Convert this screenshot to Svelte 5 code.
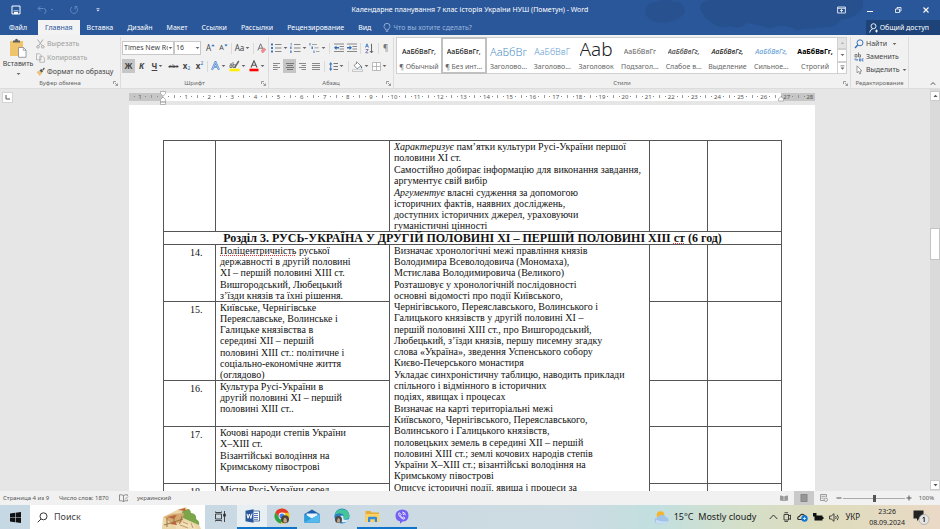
<script>
  const tabs = ['Файл', 'Главная', 'Вставка', 'Дизайн', 'Макет', 'Ссылки', 'Рассылки', 'Рецензирование', 'Вид'];
  const styles = [
    { name: '¶ Обычный', sample: 'АаБбВвГг,', kind: 'normal' },
    { name: '¶ Без инт...', sample: 'АаБбВвГг,', kind: 'normal', on: true },
    { name: 'Заголово...', sample: 'АаБбВг', kind: 'h1' },
    { name: 'Заголово...', sample: 'АаБбВвГ', kind: 'h2' },
    { name: 'Заголовок', sample: 'Ааb', kind: 'title' },
    { name: 'Подзагол...', sample: 'АаБбВвГг', kind: 'sub' },
    { name: 'Слабое в...', sample: 'АаБбВвГг,', kind: 'weak' },
    { name: 'Выделение', sample: 'АаБбВвГг,', kind: 'em' },
    { name: 'Сильное...', sample: 'АаБбВвГг,', kind: 'strongem' },
    { name: 'Строгий', sample: 'АаБбВвГг,', kind: 'strong' }
  ];
  const cm = 618 / 26.75;
  const origin = 34;
  const marks = [];
  for (let q = -5; q <= 115; q++) {
    if (q === 0) continue;
    const x = origin + (q * cm) / 4;
    if (x < 1 || x > 684) continue;
    marks.push({ x, whole: q % 4 === 0, half: Math.abs(q % 4) === 2, n: Math.abs(q / 4) });
  }
  const outcomes = [
    ['Визначає хронологічні межі правління князів', 'Володимира Всеволодовича (Мономаха),', 'Мстислава Володимировича (Великого)'],
    ['Розташовує у хронологічній послідовності', 'основні відомості про події Київського,', 'Чернігівського, Переяславського, Волинського і', 'Галицького князівств у другій половині XI –'],
    ['першій половині XIII ст., про Вишгородський,', 'Любецький, з’їзди князів, першу писемну згадку', 'слова «Україна», зведення Успенського собору', 'Києво-Печерського монастиря'],
    ['Укладає синхроністичну таблицю, наводить приклади', 'спільного і відмінного в історичних', 'подіях, явищах і процесах'],
    ['Визначає на карті територіальні межі', 'Київського, Чернігівського, Переяславського,', 'Волинського і Галицького князівств,'],
    ['половецьких земель в середині XII – першій', 'половині XIII ст.; землі кочових народів степів', 'України X–XIII ст.; візантійські володіння на', 'Кримському півострові'],
    ['Описує історичні події, явища і процеси за']
  ];
  const lessons = [
    { n: 15, h: 79, text: [['Київське, Чернігівське', 'Переяславське, Волинське і', 'Галицьке князівства в', 'середині XII – першій'], ['половині XIII ст.: політичне і', 'соціально-економічне життя', '(оглядово)']] },
    { n: 16, h: 46, text: [['Культура Русі-України в', 'другій половині XI – першій', 'половині XIII ст..']] },
    { n: 17, h: 57, text: [['Кочові народи степів України', 'X–XIII ст.'], ['Візантійські володіння на', 'Кримському півострові']] },
    { n: 18, h: 57, text: [['Місце Русі-України серед']] }
  ];
</script>

{#snippet chev()}
  <svg class="chev" width="5" height="4" viewBox="0 0 5 4"><path d="M.6 1h3.8L2.5 3z" fill="#666" /></svg>
{/snippet}

{#snippet paragraphs(list)}
  {#each list as lines}
    <p>{#each lines as line, i}{line}{#if i < lines.length - 1}<br />{/if}{/each}</p>
  {/each}
{/snippet}

{#snippet launcher()}
  <svg class="launcher" width="5" height="5" viewBox="0 0 5 5" fill="none" stroke="#777" stroke-width=".7"><path d="M.5 3V.5H3M2 2l2.3 2.3M4.5 2.5v2h-2" /></svg>
{/snippet}

<div class="app">
  <header>
    <svg class="clouds" viewBox="0 0 300 35" preserveAspectRatio="xMaxYMid slice" fill="#234b82">
      <path d="M6 8q2-7 12-6q8-5 15 0q6-2 9 3q7 8-3 13q-14 8-26 3q-10-4-7-13z" opacity=".45" />
      <path d="M60 8q0-8 12-8h150q4 8-5 14q-8 6-16 5q-4 9-15 8l-30 3q-8-5-18-4q-8 4-16 0l-15-3q-7 7-17 3q-10 4-18-3q-10-7-12-15z" opacity=".5" />
    </svg>
    <div class="titlebar">
      <div class="quick">
        <button aria-label="Сохранить"><svg width="10" height="10" viewBox="0 0 10 10"><path d="M1 1h8v8H1z" fill="none" stroke="#fff" /><path d="M2.500 5.400h5v.8h-5zM3 7h4v2H3z" fill="#fff" /></svg></button>
        <button aria-label="Отменить"><svg width="16" height="10" viewBox="0 0 16 10" fill="none" stroke="#5f86bf"><path d="M3.500 1 1 3.500 3.500 6M1 3.500h5.500q2.500 0 2.500 2.500t-2 2.500" /><path d="M14 4.500h2" /></svg></button>
        <button aria-label="Повторить"><svg width="10" height="10" viewBox="0 0 10 10" fill="none" stroke="#5f86bf"><path d="M3 2a3.500 3.500 0 1 0 4 0M8.500 1.500H6v3" /></svg></button>
        <button aria-label="Настройка панели"><svg width="6" height="6" viewBox="0 0 6 6" fill="#dbe5f3"><path d="M1.500 1h3v.8h-3zM1.300 2.700h3.400L3 4.600z" /></svg></button>
      </div>
      <h1>Календарне планування 7 клас історія України НУШ (Пометун) - Word</h1>
      <div class="wins">
        <button aria-label="Параметры ленты"><svg width="9" height="8" viewBox="0 0 9 8" fill="none" stroke="#fff" stroke-width=".8"><path d="M.6 1h7.800v6H.6zM.6 2.300h7.800M4.500 6.500V3.600M3 5l1.500-1.500L6 5" /></svg></button>
        <button aria-label="Свернуть"><svg width="8" height="8" viewBox="0 0 8 8"><path d="M1 5h6v1H1z" fill="#fff" /></svg></button>
        <button aria-label="Восстановить"><svg width="8" height="8" viewBox="0 0 8 8" fill="none" stroke="#fff" stroke-width=".8"><path d="M1.500 3h4v3.500h-4zM3 3V1.500h4V5H5.500" /></svg></button>
        <button aria-label="Закрыть"><svg width="8" height="8" viewBox="0 0 8 8" stroke="#fff" stroke-width="1.100"><path d="m1.500 1.500 5 5m0-5-5 5" /></svg></button>
      </div>
    </div>
    <nav class="tabs">
      {#each tabs as tab, i}
        <button class="t{i}" class:active={i === 1}>{tab}</button>
      {/each}
      <label class="tell">
        <svg width="8" height="10" viewBox="0 0 8 10" fill="none" stroke="#a9c0e0" stroke-width=".8"><path d="M2.800 7C2.800 5.500 1 5 1 3.300a3 3 0 0 1 6 0C7 5 5.200 5.500 5.200 7zM2.800 8.300h2.400" /></svg>
        <input type="text" placeholder="Что вы хотите сделать?" />
      </label>
      <button class="share"><svg width="9" height="10" viewBox="0 0 9 10" fill="none" stroke="#fff" stroke-width=".9"><circle cx="4.500" cy="3.200" r="2.500" /><path d="M.7 9.500q.3-3 3-3.600M6 8h3M7.500 6.500v3" /></svg>Общий доступ</button>
    </nav>
  </header>

  <section class="ribbon">
    <div class="group clip">
      <div class="body">
        <button class="paste">
          <svg width="18" height="20" viewBox="0 0 18 20"><path d="M1 3h13v15H1z" fill="#f0c36d" /><path d="M4 4.500V2.500h2q0-1.800 1.500-1.800T9 2.500h2v2z" fill="#5f5f5f" /><path d="M9.500 9.500h5l2.500 2.500v7.300H9.500z" fill="#fff" stroke="#888" stroke-width=".8" /><path d="M14.300 9.500v2.800H17" fill="none" stroke="#888" stroke-width=".7" /></svg>
          <span>Вставить</span>{@render chev()}
        </button>
        <div class="stack">
          <button class="off"><svg width="9" height="10" viewBox="0 0 9 10" fill="none" stroke="#aaa" stroke-width="1"><path d="M1.500.5 6 6.500M7 .5 2.800 6.500" /><circle cx="2" cy="7.800" r="1.300" /><circle cx="6.800" cy="7.800" r="1.300" /></svg>Вырезать</button>
          <button class="off"><svg width="9" height="10" viewBox="0 0 9 10" fill="#f4f4f4" stroke="#aaa" stroke-width=".8"><path d="M.5.8h3l1.500 1.500v4.500H.5zM3.800 3.300h3L8.400 5v4.300H3.800z" /></svg>Копировать</button>
          <button><svg width="9" height="10" viewBox="0 0 9 10"><path d="M.5 5 4 3.500l2 3L3.500 9z" fill="#eec27a" /><path d="m3.500 3.300 2-1.300 1.600 2.300L5.500 5.800zM6.300 2.300 8 .6l.8.8L7.300 3.500z" fill="#555" /></svg>Формат по образцу</button>
        </div>
      </div>
      <footer>Буфер обмена{@render launcher()}</footer>
    </div>

    <div class="group font">
      <div class="body rows">
        <div class="row">
          <span class="combo face"><select aria-label="Шрифт"><option>Times New Roman</option></select>{@render chev()}</span>
          <span class="combo size"><select aria-label="Размер"><option>16</option></select>{@render chev()}</span>
          <button class="b first" aria-label="Увеличить размер"><span>A</span><svg width="4" height="8" viewBox="0 0 4 8"><path d="m.3 2.300 1.700-2 1.700 2z" fill="#2b6cb8" /></svg></button>
          <button class="b" aria-label="Уменьшить размер"><span class="small">A</span><svg width="4" height="8" viewBox="0 0 4 8"><path d="m.3.500 1.700 2 1.700-2z" fill="#2b6cb8" /></svg></button>
          <i class="sep"></i>
          <button class="b wide">Aa{@render chev()}</button>
          <i class="sep"></i>
          <button class="b" aria-label="Очистить формат"><svg width="10" height="11" viewBox="0 0 10 11"><path d="M.8 7.500 3.600.8 6.300 7M1.900 5.200h3.200" fill="none" stroke="#666" stroke-width=".9" /><path d="m3.800 7.500 3-3 2.500 2-3 3.500H5z" fill="#ed8c94" /></svg></button>
        </div>
        <div class="row">
          <button class="b on"><b>Ж</b></button>
          <button class="b"><b><em>К</em></b></button>
          <button class="b wide"><b><u>Ч</u></b>{@render chev()}</button>
          <button class="b tiny"><s>abc</s></button>
          <button class="b"><b>x</b><sub>2</sub></button>
          <button class="b"><b>x</b><sup>2</sup></button>
          <i class="sep"></i>
          <button class="b wide" aria-label="Эффекты"><svg width="9" height="10" viewBox="0 0 9 10" fill="none"><path d="M1 8.800 4.500 1 8 8.800M2.300 6h4.400" stroke="#4a86cf" stroke-width="2" /><path d="M1 8.800 4.500 1 8 8.800M2.300 6h4.400" stroke="#e6f0fb" stroke-width=".6" /></svg>{@render chev()}</button>
          <button class="b wide" aria-label="Выделение цветом"><svg width="11" height="12" viewBox="0 0 11 12"><path d="M.5 8.700h10v2.600H.500z" fill="#ffee00" /><path d="M1 5h2v2.500H1zM1 4h2M4 2v5.500h2.500V4.800H4" fill="none" stroke="#555" stroke-width=".8" /><path d="M9.800 1 5.500 7.800" stroke="#666" stroke-width="1.500" /></svg>{@render chev()}</button>
          <button class="b wide" aria-label="Цвет текста"><svg width="10" height="12" viewBox="0 0 10 12"><path d="M.5 8.700h9v2.600h-9z" fill="#f00" /><path d="M2 7.500 5 .8l3 6.700M3 5.300h4" fill="none" stroke="#555" stroke-width="1.100" /></svg>{@render chev()}</button>
        </div>
      </div>
      <footer>Шрифт{@render launcher()}</footer>
    </div>

    <div class="group para">
      <div class="body rows">
        <div class="row">
          <button class="b wide" aria-label="Маркеры"><svg width="11" height="10" viewBox="0 0 11 10"><path d="M0 .500h2v2H0zM0 4h2v2H0zM0 7.500h2v2H0z" fill="#3e74b8" /><path d="M4 1h6.500v1H4zM4 4.500h6.500v1H4zM4 8h6.500v1H4z" fill="#888" /></svg>{@render chev()}</button>
          <button class="b wide" aria-label="Нумерация"><svg width="11" height="10" viewBox="0 0 11 10"><path d="M.7 0h1v2.500h-1zM0 3.500h1.700V6H0zM0 7.500h1.700V10H0z" fill="#6b94c8" /><path d="M4 1h6.500v1H4zM4 4.500h6.500v1H4zM4 8h6.500v1H4z" fill="#888" /></svg>{@render chev()}</button>
          <button class="b wide" aria-label="Многоуровневый список"><svg width="11" height="10" viewBox="0 0 11 10"><path d="M.5 0h1v2.500h-1zM2.500 3.500H4V6H2.500zM4.500 7.500h1V10h-1z" fill="#4d80c0" /><path d="M3 1h5v.8H3zM5.500 4.500h4v.8h-4zM7 8h3.500v.8H7z" fill="#888" /></svg>{@render chev()}</button>
          <i class="sep"></i>
          <button class="b" aria-label="Уменьшить отступ"><svg width="10" height="10" viewBox="0 0 10 10"><path d="M0 .500h10v1H0zM5.500 3H10v1H5.500zM5.500 5.500H10v1H5.500zM0 8h10v1H0z" fill="#888" /><path d="M0 4.800 2.500 2.500V4H5v1.500H2.500V7z" fill="#2f6cb5" /></svg></button>
          <button class="b" aria-label="Увеличить отступ"><svg width="10" height="10" viewBox="0 0 10 10"><path d="M0 .500h10v1H0zM5.500 3H10v1H5.500zM5.500 5.500H10v1H5.500zM0 8h10v1H0z" fill="#888" /><path d="M5 4.800 2.500 2.500V4H0v1.500h2.500V7z" fill="#2f6cb5" /></svg></button>
          <i class="sep"></i>
          <button class="b" aria-label="Сортировка"><svg width="9" height="11" viewBox="0 0 9 11" fill="none"><path d="M.5 4.500 2 .8l1.500 3.700M1 3.300h2" stroke="#3f7bc5" stroke-width=".9" /><path d="M.7 6.500h2.600L.7 9.800h2.600" stroke="#7a6fb0" stroke-width=".9" /><path d="M6.500.8v9M4.800 8l1.700 1.900L8.200 8" stroke="#666" /></svg></button>
          <i class="sep"></i>
          <button class="b pilcrow" aria-label="Знаки абзаца">¶</button>
        </div>
        <div class="row">
          <button class="b" aria-label="По левому краю"><svg width="7" height="7" viewBox="0 0 7 7"><path d="M0 0h7v1H0zM0 2h4.500v1H0zM0 4h7v1H0zM0 6h4.500v1H0z" fill="#888" /></svg></button>
          <button class="b on" aria-label="По центру"><svg width="8" height="7" viewBox="0 0 8 7"><path d="M0 0h8v1H0zM1 2h6v1H1zM0 4h8v1H0zM1 6h6v1H1z" fill="#777" /></svg></button>
          <button class="b" aria-label="По правому краю"><svg width="7" height="7" viewBox="0 0 7 7"><path d="M0 0h7v1H0zM2.500 2H7v1H2.500zM0 4h7v1H0zM2.500 6H7v1H2.500z" fill="#888" /></svg></button>
          <button class="b" aria-label="По ширине"><svg width="8" height="7" viewBox="0 0 8 7"><path d="M0 0h8v1H0zM0 2h8v1H0zM0 4h8v1H0zM0 6h8v1H0z" fill="#888" /></svg></button>
          <i class="sep"></i>
          <button class="b wide" aria-label="Интервал"><svg width="9" height="9" viewBox="0 0 9 9"><path d="M1.700 0 3.400 2.500H2.200v4h1.200L1.700 9 0 6.500h1.200v-4H0z" fill="#3a74ba" /><path d="M4.500 1H9v1H4.500zM4.500 4H9v1H4.500zM4.500 7H9v1H4.500z" fill="#777" /></svg>{@render chev()}</button>
          <i class="sep"></i>
          <button class="b wide" aria-label="Заливка"><svg width="11" height="11" viewBox="0 0 11 11"><path d="m2 4.500 3.500-3L9 5 5 7.800z" fill="#fff" stroke="#777" stroke-width=".8" /><path d="M4.500 3V.5" stroke="#777" stroke-width=".8" /><path d="M9 4.500q2 2 .8 3.200Q8.500 7 9 4.500z" fill="#3a74ba" /><path d="M.5 8.800h10v1.700H.500z" fill="#fff" stroke="#999" stroke-width=".5" /></svg>{@render chev()}</button>
          <button class="b wide" aria-label="Границы"><svg width="9" height="9" viewBox="0 0 9 9" fill="#fff" stroke="#aaa" stroke-width=".8"><path d="M.5.5h8v8h-8zM4.500.5v8M.5 4.500h8" /></svg>{@render chev()}</button>
        </div>
      </div>
      <footer>Абзац{@render launcher()}</footer>
    </div>

    <div class="group gal">
      <div class="body">
        <div class="gallery">
          {#each styles as s}
            <button class="style" class:sel={s.on}><span class="sample {s.kind}">{s.sample}</span><span class="name">{s.name}</span></button>
          {/each}
        </div>
        <div class="scroller">
          <button class="dis" aria-label="Вверх"><svg width="5" height="4" viewBox="0 0 5 4"><path d="M1 3h3L2.500 1z" fill="#aaa" /></svg></button>
          <button aria-label="Вниз">{@render chev()}</button>
          <button aria-label="Ещё"><svg width="5" height="6" viewBox="0 0 5 6"><path d="M.5.5h4v.8h-4zM.6 2.500h3.800L2.500 4.800z" fill="#666" /></svg></button>
        </div>
      </div>
      <footer>Стили{@render launcher()}</footer>
    </div>

    <div class="group edit">
      <div class="body stack">
        <button><svg width="10" height="10" viewBox="0 0 10 10" fill="none" stroke="#3a74ba"><circle cx="6" cy="3.800" r="3" /><path d="M3.700 6 1 9" stroke-width="1.500" /></svg>Найти<span class="gap">{@render chev()}</span></button>
        <button><svg width="10" height="10" viewBox="0 0 10 10" fill="none"><path d="M1 2.500h2V5H1zM4.500.5V5h2V2.800h-2" stroke="#666" stroke-width=".8" /><path d="M1 6.300v1.500h2.500M2.800 6.800l1 1-1 1M5.500 6.800h1.300V9H5.500zM9.500 6.800H8.300V9h1.200" stroke="#3a74ba" stroke-width=".8" /></svg>Заменить</button>
        <button><svg width="10" height="10" viewBox="0 0 10 10" fill="#fff" stroke="#888" stroke-width=".8"><path d="M3 .8v7l1.700-1.500 1 2.700 1.200-.5-1-2.500h2z" /></svg>Выделить{@render chev()}</button>
      </div>
      <footer>Редактирование</footer>
    </div>
    <button class="collapse" aria-label="Свернуть ленту"><svg width="6" height="5" viewBox="0 0 6 5" fill="none" stroke="#555"><path d="m.8 3.800 2.200-2.300 2.200 2.300" /></svg></button>
  </section>

  <div class="work">
    <div class="gutter"><button aria-label="Табуляция"><svg width="5" height="5" viewBox="0 0 5 5"><path d="M1 0v4h4" fill="none" stroke="#555" /></svg></button></div>
    <main>
      <svg class="ruler" width="686" height="16" viewBox="0 0 686 16">
        <path d="M0 4h686v8H0z" fill="#c6c6c6" />
        <path d="M34 4h618v8H34z" fill="#fff" />
        {#each marks as m}
          {#if m.whole}
            <text x={m.x} y="10" text-anchor="middle">{m.n}</text>
          {:else if m.half}
            <path d="M{Math.floor(m.x)} 6h1v3h-1z" fill="#999" />
          {:else}
            <path d="M{Math.floor(m.x)} 7h1v1h-1z" fill="#888" />
          {/if}
        {/each}
        <path d="M31.500 2.500h5v2L34 7.300l-2.500-2.800zM31.500 13V10.500L34 8l2.500 2.500V13zM31.500 13h5v2.500h-5zM649.500 12v-2l2.500-2.500 2.500 2.500v2z" fill="#fff" stroke="#999" stroke-width=".7" />
      </svg>
      <article>
        <table>
          <colgroup><col class="c1" /><col class="c2" /><col class="c3" /><col class="c4" /><col class="c5" /></colgroup>
          <tbody>
            <tr>
              <td></td><td></td>
              <td>
                <p><i>Характеризує</i> пам’ятки культури Русі-України першої<br />половини XI ст.</p>
                <p>Самостійно добирає інформацію для виконання завдання,<br />аргументує свій вибір</p>
                <p><i>Аргументує</i> власні судження за допомогою<br />історичних фактів, наявних досліджень,<br />доступних історичних джерел, ураховуючи<br />гуманістичні цінності</p>
              </td>
              <td></td><td></td>
            </tr>
            <tr><th colspan="5">Розділ 3. РУСЬ-УКРАЇНА У ДРУГІЙ ПОЛОВИНІ XI – ПЕРШІЙ ПОЛОВИНІ XIII <span class="typo">ст</span> (6 год)</th></tr>
            <tr style:height="57px">
              <td class="num">14.</td>
              <td>
                <p><span class="typo">Поліцентричність</span> руської<br />державності в другій половині<br />XI – першій половині XIII ст.</p>
                <p>Вишгородський, Любецький<br />з’їзди князів та їхні рішення.</p>
              </td>
              <td rowspan="5">{@render paragraphs(outcomes)}</td>
              <td></td><td></td>
            </tr>
            {#each lessons as l}
              <tr style:height="{l.h}px">
                <td class="num">{l.n}.</td>
                <td>{@render paragraphs(l.text)}</td>
                <td></td><td></td>
              </tr>
            {/each}
          </tbody>
        </table>
      </article>
    </main>
    <div class="vscroll">
      <button aria-label="Прокрутить вверх"><svg width="5" height="4" viewBox="0 0 5 4"><path d="M.5 3h4l-2-2.300z" fill="#555" /></svg></button>
      <div class="track"><div class="thumb"></div></div>
      <button aria-label="Прокрутить вниз"><svg width="5" height="4" viewBox="0 0 5 4"><path d="M.5 1h4l-2 2.300z" fill="#555" /></svg></button>
    </div>
  </div>

  <div class="status">
    <span class="pages">Страница 4 из 9</span>
    <span class="words">Число слов: 1870</span>
    <svg width="10" height="8" viewBox="0 0 10 8" fill="none" stroke="#777" stroke-width=".8"><path d="M4.500 1.500Q3 .5.500.8v6q2.500-.3 4 .7zM4.500 1.500Q6 .5 8.500.8v1M4.500 7.500q1.500-1 4-.7V5.500M6 5.500l3-3" /></svg>
    <span class="lang">украинский</span>
    <div class="views">
      <button aria-label="Режим чтения"><svg width="8" height="7" viewBox="0 0 8 7"><path d="M0 .5q2 0 3.700.7v5Q2 5.500 0 5.500zM8 .5q-2 0-3.700.7v5Q6 5.500 8 5.500z" fill="#999" /></svg></button>
      <button class="cur" aria-label="Разметка страницы"><svg width="8" height="8" viewBox="0 0 8 8"><path d="M.5 0h7v8h-7z" fill="#888" /><path d="M1.500 2h5M1.500 4h5M1.500 6h5" stroke="#bbb" stroke-width=".6" /></svg></button>
      <button aria-label="Веб-документ"><svg width="8" height="8" viewBox="0 0 8 8" fill="none" stroke="#888" stroke-width=".8"><path d="M4 6.500H.5v-6h6v2.500M1.500 2.300h4M1.500 4.200h2" /><circle cx="5.800" cy="5.700" r="1.700" /></svg></button>
    </div>
    <div class="zoom">
      <button aria-label="Уменьшить"><svg width="6" height="6" viewBox="0 0 6 6"><path d="M.5 2.500h5v1h-5z" fill="#555" /></svg></button>
      <input type="range" min="0" max="100" value="50" aria-label="Масштаб" />
      <button aria-label="Увеличить"><svg width="6" height="6" viewBox="0 0 6 6"><path d="M.5 2.500h5v1h-5zM2.500.500h1v5h-1z" fill="#555" /></svg></button>
      <span class="pct">100%</span>
    </div>
  </div>

  <div class="taskbar">
    <button class="start" aria-label="Пуск"><svg width="11" height="11" viewBox="0 0 11 11" fill="#111"><path d="M0 1.500 5 .8v4.400H0zM5.600.700 11 0v5.200H5.600zM0 5.800h5v4.400l-5-.7zM5.600 5.800H11V11l-5.400-.7z" /></svg></button>
    <label class="search">
      <svg width="11" height="11" viewBox="0 0 11 11" fill="none" stroke="#333"><circle cx="6.500" cy="4.300" r="3.500" /><path d="M4 7 .7 10.300" /></svg>
      <input type="text" placeholder="Поиск" />
      <svg class="art" width="39" height="23" viewBox="0 0 39 23">
        <path d="m1 11 8-4 8-4 7-2 2 3 9 10 4 9H0z" fill="#ead6a8" />
        <path d="M20 9q-1-5 4-5 4-3 5 3 6 1 5 6 4 2 3 6l-9-4-7-3z" fill="#7ba548" />
        <path d="m2 11 8-3 12-1-2 9-10 2z" fill="#d5a871" />
        <path d="m5 11 10-2-3 4zM16 4l7-2 1 3zM8 18l5-3 2 4z" fill="#c0603a" />
        <path d="M12 9v8M5 12v9M20 10l-3 10M2 19l10-3 9-3" stroke="#9a7643" fill="none" />
        <path d="m14 20 9-5 8 3 4 5H14z" fill="#f0dfb6" />
        <path d="m21 16 5 2M18 19l8 3M29 17l2 5" stroke="#c39a64" />
      </svg>
    </label>
    <button class="app-b" aria-label="Представление задач"><svg width="11" height="11" viewBox="0 0 11 11" fill="none" stroke="#333" stroke-width=".9"><path d="M.5 3h6v5h-6zM.5.500v1h6v-1M.500 10.500v-1h6v1M9.500 0v3M9.500 5.500V11" /><path d="M8.700 3h1.600v2.300H8.700z" fill="#333" /></svg></button>
    <button class="app-b open lit" aria-label="Word"><svg width="15" height="14" viewBox="0 0 15 14"><path d="M7 2h7.500v10H7z" fill="#fff" stroke="#2b579a" stroke-width=".8" /><path d="M9 4.500h4M9 6.500h4M9 8.500h4M9 10.300h4" stroke="#2b579a" stroke-width=".8" /><path d="M.5 1.700 8.500.3v13.400L.5 12.300z" fill="#2b579a" /><path d="m2 4.800 1 4.500 1.400-4.300L5.900 9.400 7 4.600" fill="none" stroke="#fff" /></svg></button>
    <button class="app-b open" aria-label="Chrome"><svg width="16" height="16" viewBox="0 0 16 16"><circle cx="8" cy="8" r="7.500" fill="#f4c20d" /><path d="M1.500 4.200a7.500 7.500 0 0 1 13.200.5H8L5 9.500z" fill="#e33b2e" /><path d="M1.500 4.200 5 9.700l3 2-1.200 3.700A7.500 7.500 0 0 1 1.500 4.200z" fill="#2ba24c" /><circle cx="8" cy="8" r="3.400" fill="#fff" /><circle cx="8" cy="8" r="2.600" fill="#4285f4" /><circle cx="11" cy="11.300" r="4" fill="#4c443b" /><path d="M9.500 14.500q-.5-4 1.500-5 2 1 2 5z" fill="#c9a684" /></svg></button>
    <button class="app-b" aria-label="Почта"><svg width="16" height="14" viewBox="0 0 16 14"><path d="M.5 5 8 .5 15.500 5v8.500H.5z" fill="#1c5fae" /><path d="M2.500 4.500h11V10h-11z" fill="#e9f5fc" /><path d="M.5 5 8 9.500 15.500 5v8.500H.5z" fill="#2a9fe0" /><path d="m.5 13.500 15-8.500v8.500z" fill="#55b9ee" /></svg></button>
    <button class="app-b" aria-label="Edge"><svg width="16" height="16" viewBox="0 0 16 16"><circle cx="8" cy="8" r="7.500" fill="#1e85c9" /><path d="M.8 7A7.500 7.500 0 0 1 15.500 7.500q0 4-4.500 3.800-2 0-1.500-1.500.8-3.800-3-4.300Q3 5.200.800 7z" fill="#43c49a" /><path d="M.8 7Q3 5 6 5.500q4 .5 3.500 4-3-2-4 1L2 12.500Q0 10 .800 7z" fill="#2c7fc0" /><path d="M6 9.500q0-2 2-2t1.500 2.300q-.5 2 1.500 2 3 .2 4-.8-2 4-6 3.500-3-1-3-5z" fill="#d7ecf6" /><circle cx="4.500" cy="11.500" r="3.500" fill="#4a4a4a" /><path d="M3 14.500q0-4 1.500-4.500 2 .5 1.500 4.500z" fill="#c3a287" /></svg></button>
    <button class="app-b open" aria-label="Проводник"><svg width="15" height="13" viewBox="0 0 15 13"><path d="M.5 1h5l1 1.500h7.500V12H.5z" fill="#e8ac33" /><path d="M.5 4h14v8H.5z" fill="#fbd364" /><path d="M3 12V8q0-1.200 1.200-1.200h6.600Q12 6.800 12 8v4h-2.200V9.300H5.200V12z" fill="#2e8be0" /></svg></button>
    <button class="app-b open" aria-label="Viber"><svg width="14" height="15" viewBox="0 0 14 15"><path d="M7 .5q6.500 0 6.500 6T7.500 12.500L5 14.800V12.300Q.5 11.500.5 6.500T7 .5z" fill="#7360f2" /><path d="M4.300 3.700q-1.300.8-.3 2.600Q5.500 9 8 10q1.300.5 2-.8L8.300 8l-.9.800Q6 8 5.300 6.400L6 5.500zM7.300 3q3 .3 3 3.200M7.500 4.700q1.300.1 1.300 1.400" fill="none" stroke="#fff" stroke-width=".9" /></svg></button>

    <div class="tray">
      <button class="weather"><svg width="16" height="14" viewBox="0 0 16 14"><circle cx="6.500" cy="5" r="3.800" fill="#f7b32b" /><path d="M3.500 13.500a3 3 0 0 1 .3-6 4.500 4.500 0 0 1 8.200-.3 3.200 3.200 0 0 1 0 6.300z" fill="#9fc3ea" /><path d="M3.500 13.500q-2.500-1-1.500-4 5 3 12 1.500-.3 2-2 2.500z" fill="#c9def5" /></svg>15°C&nbsp; Mostly cloudy</button>
      <svg width="9" height="6" viewBox="0 0 9 6" fill="none" stroke="#333"><path d="m.7 5 3.800-4 3.800 4" /></svg>
      <svg width="9" height="10" viewBox="0 0 9 10" fill="none" stroke="#333" stroke-width=".9"><path d="M1 2.500h4.500v5.500H1zM5.500 4l2-1v4.500l-2-1M1.500.7h3.500M1.500 9.600h3.500" /></svg>
      <svg width="11" height="10" viewBox="0 0 11 10"><path d="M1 7.500Q0 5 2.500 4.300 4.500 1 7.500 3.500L9 4.500" fill="none" stroke="#333" stroke-width="1.200" /><path d="M1 7.500h4" stroke="#333" /><circle cx="7.500" cy="6.500" r="3.200" fill="#1477d4" /><path d="M6 6.500h3M7.500 5v3" stroke="#fff" stroke-width=".7" /></svg>
      <svg width="11" height="8" viewBox="0 0 11 8" fill="#111"><path d="M1.500 2.500h8v5h-8zM9.500 4h1v2h-1zM0 0h3.500v3.500H0z" /></svg>
      <svg width="11" height="9" viewBox="0 0 11 9" fill="none" stroke="#333" stroke-width=".9"><path d="M.5 3v3h1.800L5 8.300V.7L2.300 3zM6.700 3q1 1.500 0 3M8.300 1.800q2 2.700 0 5.400" /></svg>
      <span class="kb">УКР</span>
      <time><span>23:26</span><span>08.09.2024</span></time>
      <button class="note" aria-label="Уведомления"><svg width="17" height="16" viewBox="0 0 17 16"><path d="M.5 1.500h10v8H6.500L4 12V9.500H.5z" fill="#222" /><circle cx="11" cy="10.500" r="5" fill="#e3e3e3" stroke="#999" stroke-width=".6" /><path d="m9.700 9.200 1.500-1v4.800" fill="none" stroke="#222" /></svg></button>
    </div>
  </div>
</div>

<style>
  :global(body) { margin: 0; }
  .app { height: 100vh; display: flex; flex-direction: column; overflow: hidden; font-family: "Noto Sans", "Open Sans", sans-serif; font-size: 7px; line-height: 10px; color: #444; background: #e6e6e6; }
  button, input, select { font: inherit; color: inherit; border: 0; padding: 0; margin: 0; background: none; border-radius: 0; }
  button { display: flex; align-items: center; justify-content: center; white-space: nowrap; cursor: pointer; }
  svg { flex: none; display: block; }
  p { margin: 0; }

  header { position: relative; flex: none; background: #2a579a; color: #fff; }
  .clouds { position: absolute; right: 0; top: 0; width: 300px; height: 35px; }
  .titlebar { position: relative; display: grid; grid-template-columns: 1fr auto 1fr; align-items: center; height: 20px; }
  .quick { display: flex; gap: 16px; padding-left: 11px; }
  h1 { margin: 0; font-size: 7px; font-weight: 400; }
  .wins { display: flex; justify-content: flex-end; gap: 20px; padding-right: 10px; }
  .tabs { position: relative; display: flex; height: 15px; }
  .tabs button { padding: 0 7px; }
  .tabs .t0 { padding: 0 11px 0 9px; }
  .tabs .active { background: #f3f3f3; color: #2a579a; }
  .tell { display: flex; align-items: center; gap: 2px; padding-left: 5px; flex: 1; }
  .tell input { width: 96px; outline: 0; }
  .tell input::placeholder { color: #9db7dc; opacity: 1; }
  .tabs .share { background: #1d4378; gap: 2px; padding: 0 11px 0 3px; }

  .ribbon { flex: none; display: flex; height: 54px; background: #f1f1f1; border-bottom: 1px solid #dcdcdc; box-sizing: border-box; }
  .group { display: flex; flex-direction: column; border-right: 1px solid #dcdcdc; margin: 2px 0 0; box-sizing: border-box; }
  .group .body { flex: 1; display: flex; min-height: 0; }
  .group footer { position: relative; height: 10px; text-align: center; color: #666; font-size: 6px; }
  .launcher { position: absolute; right: 2px; top: 3px; }
  .clip { width: 121px; }
  .font { width: 148px; }
  .para { width: 125px; }
  .gal { flex: 1; }
  .edit { width: 58px; }
  .paste { flex-direction: column; width: 36px; justify-content: flex-start; padding-top: 1px; }
  .paste span { margin-top: 1px; }
  .paste .chev { margin-top: 3px; }
  .clip .stack button { height: 14px; }
  .stack button { height: 13px; gap: 2px; justify-content: flex-start; }
  .off { color: #a0a0a0; }
  .group .body.stack { flex-direction: column; padding-left: 3px; }
  .gap { padding-left: 3px; }
  .body.rows { flex-direction: column; gap: 4px; padding: 4px 0 0 1px; }
  .row { display: flex; align-items: center; height: 14px; }
  .combo { position: relative; height: 14px; background: #fff; border: 1px solid #c8c8c8; box-sizing: border-box; }
  .combo select { appearance: none; width: 100%; height: 12px; padding: 0 5px 0 1px; font-size: 7px; line-height: 12px; display: block; outline: 0; }
  .combo .chev { position: absolute; right: 0; top: 4px; }
  .face { width: 52px; }
  .size { width: 27px; }
  .b { width: 13px; height: 14px; font-size: 8px; flex: none; }
  .b.first { margin-left: 3px; }
  .b.wide { width: 19px; gap: 1px; }
  .b.on { background: #c6c6c6; }
  .b .small { font-size: 7px; }
  .b.tiny { font-size: 6px; }
  .b sub, .b sup { font-size: 5px; line-height: 5px; color: #2b6cb8; }
  .b sub { align-self: flex-end; padding-bottom: 2px; }
  .b sup { align-self: flex-start; padding-top: 2px; }
  .b.pilcrow { width: 9px; color: #777; }
  .sep { width: 1px; height: 11px; background: #dadada; margin: 0 2px; flex: none; }
  .font .sep { margin: 0 1px; }

  .gallery { display: flex; flex: 1; background: #fff; border: 1px solid #d0d0d0; height: 37px; box-sizing: border-box; margin-left: 2px; }
  .style { flex: 1 1 0; width: 0; flex-direction: column; justify-content: flex-start; overflow: hidden; border: 1px solid transparent; gap: 1px; }
  .style.sel { border: 2px solid #c0c0c0; margin: -1px 0; }
  .sample { height: 22px; line-height: 26px; color: #222; font-size: 7px; font-weight: 500; overflow: hidden; max-width: 38px; }
  .name { color: #666; }
  .sample.h1 { font-size: 11px; color: #4f8fc9; font-weight: 300; max-width: 37px; }
  .sample.h2 { font-size: 9px; color: #5e9ad0; font-weight: 300; }
  .sample.title { font-size: 19px; line-height: 20px; font-weight: 300; }
  .sample.sub { color: #777; }
  .sample.weak { font-style: italic; color: #444; }
  .sample.em { font-style: italic; }
  .sample.strongem { font-style: italic; color: #6ea6d8; }
  .sample.strong { font-weight: 700; color: #000; }
  .scroller { display: flex; flex-direction: column; width: 9px; height: 37px; margin-right: 3px; }
  .scroller button { flex: 1; background: #fff; border: 1px solid #d0d0d0; border-left: 0; }
  .scroller .dis { background: #e4e4e4; }
  .collapse { align-self: flex-end; width: 31px; height: 10px; padding-left: 16px; }

  .work { flex: 1; min-height: 0; display: flex; }
  .gutter { width: 14px; padding: 3px 0 0 2px; box-sizing: border-box; }
  .gutter button { width: 11px; height: 11px; background: #fff; border: 1px solid #d2d2d2; }
  main { flex: 1; min-width: 0; display: flex; flex-direction: column; align-items: center; overflow: hidden; }
  .ruler { font-size: 6px; fill: #555; }
  article { flex: 1 0 auto; width: 686px; max-width: 100%; box-sizing: border-box; padding: 35px 34px 0; background: #fff; color: #111; font-family: "Liberation Serif", serif; font-size: 10px; line-height: 11px; }
  table { width: 100%; border-collapse: collapse; table-layout: fixed; }
  .c1 { width: 52px; } .c2 { width: 174px; } .c3 { width: 260px; } .c4 { width: 58px; } .c5 { width: 74px; }
  td, th { border: 1px solid #555; padding: 0 4px; vertical-align: top; white-space: nowrap; }
  th { font-size: 12px; line-height: 12px; text-align: center; }
  td.num { padding: 2px 0 0 26px; }
  p + p { margin-top: 1px; }
  .typo { text-decoration: underline dotted #e33 1px; text-underline-offset: 1px; text-decoration-skip-ink: none; }
  .vscroll { width: 10px; display: flex; flex-direction: column; background: #dadada; padding: 2px 0 1px; box-sizing: border-box; }
  .vscroll button { height: 10px; background: #fff; border: 1px solid #ccc; }
  .track { flex: 1; padding-top: 33%; display: flex; flex-direction: column; }
  .thumb { height: 32px; background: #fff; border: 1px solid #c4c4c4; box-sizing: border-box; margin-top: 124px; }

  .status { flex: none; display: flex; align-items: center; height: 14px; background: #f1f1f1; padding-left: 3px; color: #555; font-size: 6px; }
  .pages { width: 56px; } .words { width: 60px; } .lang { padding-left: 8px; }
  .views { display: flex; margin-left: auto; align-self: stretch; }
  .views button { width: 20px; }
  .views .cur { background: #cacaca; }
  .zoom { display: flex; align-items: center; padding-left: 2px; gap: 1px; }
  .zoom input { appearance: none; width: 62px; height: 10px; background: linear-gradient(#aaa, #aaa) center / 100% 1px no-repeat; }
  .zoom input::-webkit-slider-thumb { appearance: none; width: 3px; height: 7px; background: #555; }
  .pct { width: 27px; text-align: center; }

  .taskbar { flex: none; display: flex; height: 24px; background: linear-gradient(90deg, #c7d8e5, #cddbe2 60%, #c2dfdf 70%, #d5dfc9 79%, #dedcbd 88%, #ead9c6); color: #222; }
  .start { width: 30px; }
  .search { position: relative; display: flex; align-items: center; width: 175px; background: #fff; padding-left: 7px; box-sizing: border-box; gap: 6px; font-size: 9px; }
  .search input { width: 80px; outline: 0; }
  .search input::placeholder { color: #444; opacity: 1; }
  .art { margin-left: auto; margin-right: 4px; }
  .app-b { width: 30px; box-sizing: border-box; border-bottom: 2px solid transparent; }
  .app-b.open { border-bottom-color: #0f73c9; }
  .lit { background: #e8eff3; margin-left: 2px; }
  .tray { margin-left: auto; display: flex; align-items: center; gap: 5px; }
  .weather { font-size: 9px; gap: 4px; margin-right: 8px; }
  .kb { font-size: 8px; padding-right: 4px; }
  time { display: flex; flex-direction: column; align-items: center; line-height: 11px; font-size: 7px; }
  .note { padding: 0 10px 0 3px; }
</style>
